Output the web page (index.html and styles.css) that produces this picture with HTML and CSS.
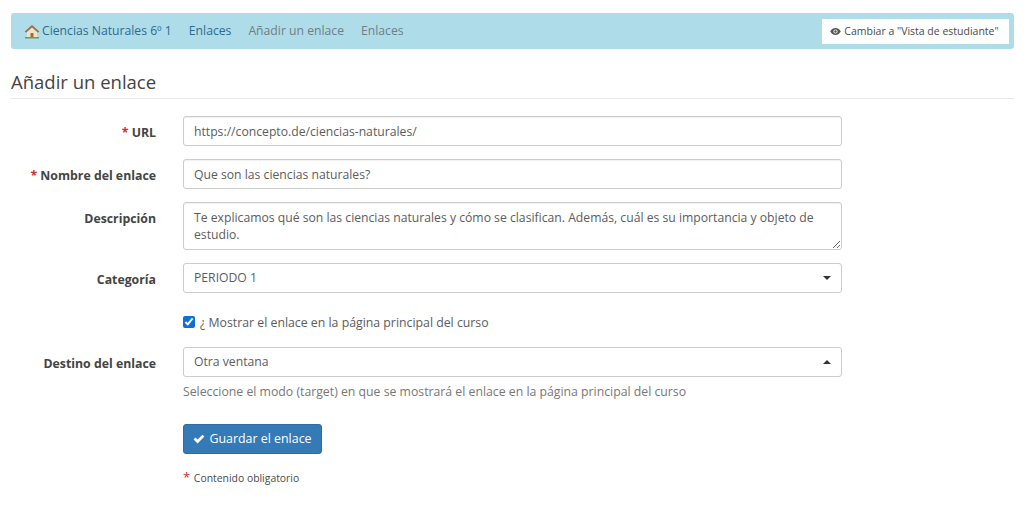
FILE: index.html
```html
<!DOCTYPE html>
<html lang="es">
<head>
<meta charset="utf-8">
<title>Añadir un enlace</title>
<link rel="stylesheet" href="styles.css">
</head>
<body>
<nav class="crumbs">
  <div class="crumb-list">
    <svg class="home" viewBox="0 0 16 16" width="16" height="16"><path d="M8 2 0.800 8.500 2 9.700 8 4.300l6 5.400 1.200-1.200z" fill="#a8653a"/><path d="M3 9.200 8 5l5 4.200V14H3z" fill="#efe4c8"/><rect x="6.500" y="10" width="3" height="4" fill="#a5683a"/><rect x="1" y="14" width="14" height="1.500" fill="#6f9a4a"/></svg>
    <a class="crumb first">Ciencias Naturales 6º 1</a>
    <a class="crumb second">Enlaces</a>
    <span class="crumb muted">Añadir un enlace</span>
    <span class="crumb muted">Enlaces</span>
  </div>
  <a class="switch"><svg class="eye" viewBox="0 0 16 12" width="11" height="9"><path d="M8 1C4.500 1 1.800 3.300 .4 6 1.800 8.700 4.500 11 8 11s6.200-2.300 7.600-5C14.200 3.300 11.500 1 8 1z" fill="#555"/><circle cx="8" cy="6" r="3" fill="#fff"/><circle cx="8" cy="6" r="1.800" fill="#555"/></svg> Cambiar a "Vista de estudiante"</a>
</nav>
<h1 class="title">Añadir un enlace</h1>
<form class="form">
  <div class="row">
    <label class="label"><span class="req">*</span> URL</label>
    <div class="field"><input class="control" type="text" value="https://concepto.de/ciencias-naturales/"></div>
  </div>
  <div class="row">
    <label class="label"><span class="req">*</span> Nombre del enlace</label>
    <div class="field"><input class="control" type="text" value="Que son las ciencias naturales?"></div>
  </div>
  <div class="row">
    <label class="label">Descripción</label>
    <div class="field"><textarea class="control area">Te explicamos qué son las ciencias naturales y cómo se clasifican. Además, cuál es su importancia y objeto de estudio.</textarea></div>
  </div>
  <div class="row">
    <label class="label">Categoría</label>
    <div class="field"><div class="control select"><span>PERIODO 1</span><i class="caret"></i></div></div>
  </div>
  <div class="row check-row">
    <div class="field check-field"><input class="check" type="checkbox" checked><span>¿ Mostrar el enlace en la página principal del curso</span></div>
  </div>
  <div class="row target-row">
    <label class="label">Destino del enlace</label>
    <div class="field">
      <div class="control select"><span>Otra ventana</span><i class="caret up"></i></div>
      <p class="help">Seleccione el modo (target) en que se mostrará el enlace en la página principal del curso</p>
    </div>
  </div>
  <div class="row button-row">
    <div class="field"><button class="save" type="button"><svg viewBox="0 0 14 12" width="12" height="10"><path d="M0.500 6.500 2.800 4.200 5.300 6.700 11.200 .8 13.500 3.100 5.300 11.300z" fill="#fff"/></svg> Guardar el enlace</button></div>
  </div>
  <div class="row note-row">
    <div class="field note"><span class="req">*</span> Contenido obligatorio</div>
  </div>
</form>
</body>
</html>
```
FILE: styles.css
```css
* { box-sizing: border-box; }
html, body { margin: 0; height: 100%; overflow: hidden; }
body {
  background: #fff;
  color: #333;
  font: 13px/18px "Open Sans", sans-serif;
  padding: 13px 10px 0 11px;
}
a { text-decoration: none; }
.crumbs {
  height: 36px;
  background: #aedce8;
  border-radius: 3px;
  display: flex;
  align-items: center;
  justify-content: space-between;
  padding: 4px 5px 4px 13px;
}
.crumb-list { display: flex; align-items: center; gap: 17px; }
.home { margin-right: -15px; flex: none; }
.crumb { font-size: 12.200px; }
.crumb.first, .crumb.second { color: #2f6a90; }
.crumb.muted { color: #6f7f86; }
.switch {
  width: 187px;
  height: 25px;
  background: #fff;
  color: #4a4a4a;
  font-size: 10.500px;
  display: flex;
  align-items: center;
  justify-content: center;
  gap: 3px;
  padding-right: 2px;
}
.title {
  margin: 21px 0 0;
  height: 29px;
  border-bottom: 1px solid #e8e8e8;
  font-size: 18.500px;
  line-height: 24px;
  font-weight: 400;
  color: #444;
}
.form { margin-top: 17px; }
.row { display: flex; margin-bottom: 13px; }
.label {
  width: 145px;
  text-align: right;
  font-weight: 700;
  font-size: 12.300px;
  color: #444;
  padding-top: 8px;
  flex: none;
}
.req { color: #c9302c; }
.field { margin-left: 27px; width: 659px; flex: none; }
.check-row .field, .button-row .field, .note-row .field { margin-left: 172px; }
.control {
  display: block;
  width: 100%;
  height: 30px;
  padding: 5px 10px;
  border: 1px solid #ccc;
  border-radius: 3px;
  background: #fff;
  color: #5c5c5c;
  font: 12.200px/18px "Open Sans", sans-serif;
  box-shadow: inset 0 1px 1px rgba(0,0,0,.06);
}
.area { height: 48px; line-height: 17px; padding: 6px 10px 5px; resize: vertical; overflow: hidden; }
.select { display: flex; align-items: center; justify-content: space-between; padding-right: 10px; box-shadow: none; }
.caret { width: 0; height: 0; border: 4px solid transparent; border-top-color: #333; border-bottom: 0; }
.caret.up { border-top: 0; border-bottom: 4px solid #333; }
.check-row { margin-top: 21px; margin-bottom: 15px; }
.check-field { display: flex; align-items: center; gap: 5px; font-size: 12.300px; color: #5c5c5c; height: 18px; }
.check { margin: -2px 0 0; width: 12px; height: 12px; accent-color: #0d6fd8; }
.target-row { margin-bottom: 23px; }
.help { margin: 6px 0 0; font-size: 12.280px; color: #777; }
.save {
  width: 139px;
  height: 30px;
  background: #337ab7;
  border: 1px solid #2e6da4;
  border-radius: 3px;
  color: #fff;
  font: 12.400px/18px "Open Sans", sans-serif;
  padding: 0;
  display: flex;
  align-items: center;
  justify-content: center;
  gap: 4px;
}
.button-row { margin-bottom: 14px; }
.note { font-size: 10.400px; color: #4a4a4a; }
.note .req { font-size: 13px; margin-right: 1px; }
```
